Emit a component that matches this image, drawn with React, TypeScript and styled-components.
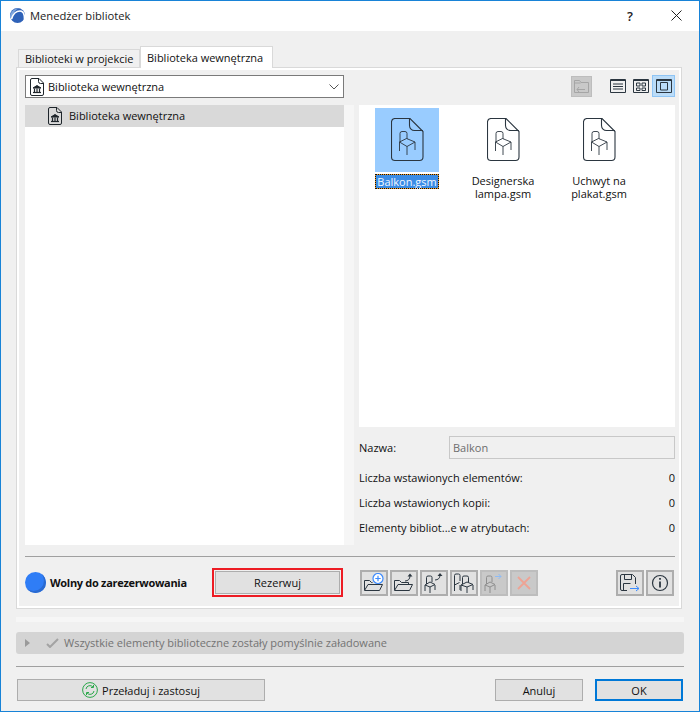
import * as React from 'react';
import styled, { createGlobalStyle } from 'styled-components';

const ink = '#2b3640';
const blue = '#3d8bfd';

const GlobalStyle = createGlobalStyle`
  html, body {
    margin: 0;
    padding: 0;
    background: #f0f0f0;
  }
  * { box-sizing: border-box; }
`;

const Window = styled.div`
  width: 700px;
  height: 712px;
  background: #f0f0f0;
  border: 1px solid #1883d7;
  font-family: "Open Sans", "Noto Sans", sans-serif;
  font-size: 11px;
  color: #111;
  display: flex;
  flex-direction: column;
  overflow: hidden;
`;

const TitleBar = styled.div`
  height: 30px;
  flex: none;
  background: #fff;
  display: flex;
  align-items: center;
  padding: 0 0 1px 9px;
  color: #222;
`;

const TitleText = styled.span`
  margin-left: 5px;
  font-size: 11.2px;
  flex: 1;
`;

const TitleHelp = styled.span`
  width: 46px;
  text-align: center;
  font-size: 13px;
  font-weight: 600;
`;

const TitleClose = styled.span`
  width: 46px;
  display: flex;
  justify-content: center;
`;

const Body = styled.div`
  flex: 1;
  display: flex;
  flex-direction: column;
  padding: 14px 15px 0 15px;
`;

const TabRow = styled.div`
  display: flex;
  align-items: flex-end;
  height: 22px;
  flex: none;
  padding-left: 2px;
  position: relative;
  z-index: 1;
`;

const Tab = styled.div<{ $active?: boolean }>`
  height: ${p => (p.$active ? '22px' : '18px')};
  margin-bottom: ${p => (p.$active ? '-1px' : '0')};
  padding: 0 6px;
  width: ${p => (p.$active ? '133px' : '122px')};
  display: flex;
  align-items: center;
  background: ${p => (p.$active ? '#fff' : '#f0f0f0')};
  border: 1px solid #d9d9d9;
  border-bottom: none;
  white-space: nowrap;
`;

const Panel = styled.div`
  width: 666px;
  height: 542px;
  flex: none;
  border: 1px solid #d9d9d9;
  box-shadow: inset 0 0 0 2px #fff;
  padding: 7px 6px 0 8px;
  display: flex;
  flex-direction: column;
`;

const Columns = styled.div`
  display: flex;
  height: 470px;
  flex: none;
`;

const LeftColumn = styled.div`
  width: 319px;
  display: flex;
  flex-direction: column;
  gap: 7px;
  flex: none;
`;

const Splitter = styled.div`
  width: 10px;
  margin-top: 30px;
  background: #f6f6f6;
  flex: none;
`;

const RightColumn = styled.div`
  flex: 1;
  padding-left: 5px;
  display: flex;
  flex-direction: column;
`;

const Combo = styled.div`
  height: 23px;
  flex: none;
  background: #fff;
  border: 1px solid #7a7a7a;
  display: flex;
  align-items: center;
  padding: 0 4px 0 4px;
  gap: 4px;
`;

const ComboLabel = styled.span`
  flex: 1;
`;

const Tree = styled.div`
  flex: 1;
  background: #fff;
`;

const TreeRow = styled.div`
  height: 22px;
  background: #d9d9d9;
  display: flex;
  align-items: center;
  padding-left: 23px;
  gap: 7px;
`;

const TreeLabel = styled.span`
  margin-bottom: 2px;
`;

const ViewBar = styled.div`
  height: 30px;
  flex: none;
  display: flex;
  justify-content: flex-end;
  align-items: flex-start;
`;

const FolderUp = styled.div`
  width: 21px;
  height: 21px;
  margin-top: 1px;
  margin-right: 14px;
  background: #c9c9c9;
  border: 1px solid #bdbdbd;
  display: flex;
  align-items: center;
  justify-content: center;
`;

const ViewButton = styled.div<{ $active?: boolean }>`
  width: 23px;
  height: 22px;
  display: flex;
  align-items: center;
  justify-content: center;
  background: ${p => (p.$active ? '#bbdcf8' : 'transparent')};
  border: 1px solid ${p => (p.$active ? '#8fc5f5' : 'transparent')};
`;

const Gallery = styled.div`
  height: 322px;
  flex: none;
  background: #fff;
  display: flex;
  align-items: flex-start;
  padding: 3px 0 0 16px;
  gap: 32px;
`;

const Item = styled.div`
  width: 64px;
  display: flex;
  flex-direction: column;
  align-items: center;
`;

const Tile = styled.div<{ $selected?: boolean }>`
  width: 64px;
  height: 64px;
  background: ${p => (p.$selected ? '#99ccff' : 'transparent')};
  display: flex;
  align-items: center;
  justify-content: center;
`;

const ItemLabel = styled.div<{ $selected?: boolean }>`
  margin-top: ${p => (p.$selected ? '3px' : '2px')};
  width: 76px;
  text-align: center;
  line-height: 13px;
  flex: none;
  ${p => p.$selected && `
    width: 62px;
    color: #f2f8ff;
    background: #3a8ce6;
    outline: 1px dotted #111;
    box-shadow: 0 0 0 1px #f29a1f;
  `}
`;

const NameRow = styled.div`
  display: flex;
  align-items: center;
  height: 23px;
  margin-top: 9px;
  flex: none;
`;

const NameLabel = styled.span`
  width: 90px;
`;

const NameInput = styled.div`
  flex: 1;
  height: 23px;
  border: 1px solid #c8c8c8;
  background: #f0f0f0;
  color: #6d6d6d;
  display: flex;
  align-items: center;
  padding-left: 3px;
`;

const Stats = styled.div`
  display: flex;
  flex-direction: column;
  margin-top: 6px;
`;

const StatRow = styled.div`
  height: 25px;
  display: flex;
  align-items: center;
  justify-content: space-between;
`;

const Divider = styled.div`
  height: 1px;
  flex: none;
  background: #a0a0a0;
`;

const PanelDivider = styled(Divider)`
  margin-top: 11px;
`;

const ActionRow = styled.div`
  display: flex;
  align-items: center;
  margin-top: 11px;
`;

const StatusDot = styled.div`
  width: 21px;
  height: 21px;
  border-radius: 50%;
  background: #2f7df6;
  box-shadow: inset -2px -2px 0 #2a6ad0;
  flex: none;
`;

const StatusText = styled.span`
  font-weight: 700;
  letter-spacing: -0.3px;
  margin-left: 4px;
  width: 162px;
  flex: none;
`;

const ReserveFrame = styled.div`
  width: 131px;
  height: 29px;
  border: 2px solid #ed1c24;
  padding: 1px;
  flex: none;
`;

const PushButton = styled.div`
  height: 100%;
  background: #e1e1e1;
  border: 1px solid #adadad;
  display: flex;
  align-items: center;
  justify-content: center;
  gap: 4px;
`;

const Tools = styled.div`
  display: flex;
  gap: 2px;
  margin-left: 17px;
`;

const ToolsEnd = styled(Tools)`
  margin-left: 78px;
`;

const ToolButton = styled.div<{ $disabled?: boolean }>`
  width: 28px;
  height: 26px;
  background: ${p => (p.$disabled ? '#c9c9c9' : '#e1e1e1')};
  border: 2px solid ${p => (p.$disabled ? '#bdbdbd' : '#adadad')};
  display: flex;
  align-items: center;
  justify-content: center;
`;

const Strip = styled.div`
  height: 5px;
  margin-top: 8px;
  flex: none;
  background: #f6f6f6;
`;

const MessageBar = styled.div`
  height: 22px;
  margin-top: 10px;
  flex: none;
  border-radius: 3px;
  background: #d4d4d4;
  color: #737373;
  display: flex;
  align-items: center;
  padding-left: 9px;
  width: 668px;
`;

const CheckMark = styled.svg`
  margin-left: 16px;
  flex: none;
`;

const MessageText = styled.span`
  margin-left: 5px;
  margin-bottom: 1px;
`;

const BottomDivider = styled(Divider)`
  margin-top: 12px;
  width: 668px;
`;

const Footer = styled.div`
  display: flex;
  align-items: center;
  margin-top: 12px;
  padding-left: 1px;
  height: 22px;
  width: 668px;
`;

const ReloadButton = styled(PushButton)`
  width: 248px;
  margin-right: 230px;
`;

const CancelButton = styled(PushButton)`
  width: 88px;
  margin-right: 12px;
`;

const OkButton = styled(PushButton)`
  width: 88px;
  border: 2px solid #0078d7;
`;

const Doc = styled.svg`
  flex: none;
  display: block;
`;

const LibraryDoc: React.FC = () => (
  <Doc width="14" height="18" viewBox="0 0 14 18" fill="none" stroke="#1e252b">
    <path d="M2 .5h7l4.500 4.500v11a1.500 1.500 0 0 1-1.500 1.500H2A1.500 1.500 0 0 1 .5 16V2A1.500 1.500 0 0 1 2 .5z" />
    <path d="M8.500 .5v3a2 2 0 0 0 2 2h3" />
    <path d="M7 7.500l4 2.500H3z" fill="#1e252b" />
    <path d="M4.500 10.500V14M7 10.500V14M9.500 10.500V14" strokeWidth="1.200" />
    <path d="M3 14.500h8" strokeWidth="1.200" />
  </Doc>
);

const ChairDoc: React.FC = () => (
  <Doc width="33" height="44" viewBox="0 0 33 44" fill="none" stroke={ink}>
    <path d="M4 .5h15l13 13V39a3.500 3.500 0 0 1-3.500 3.500H4A3.500 3.500 0 0 1 .5 39V4A3.500 3.500 0 0 1 4 .5z" strokeWidth="1.100" />
    <path d="M18.500 .5v7a5 5 0 0 0 5 5h8.500" strokeWidth="1.100" />
    <path d="M9 24V15.500a2 2 0 0 1 2-2h3a2 2 0 0 1 2 2V21" strokeWidth="0.900" />
    <path d="M8.500 24l7-3.500 8.500 3.500-8 4.500z" strokeWidth="0.900" />
    <path d="M8.500 24v9M24 24v8M16 28.500V37" strokeWidth="0.900" />
  </Doc>
);

const ButtonSvg = styled.svg`
  display: block;
  flex: none;
`;

const ChairGlyph: React.FC = () => (
  <>
    <path d="M3.500 12V5.500a1.500 1.500 0 0 1 1.500-1.500h2.500a1.500 1.500 0 0 1 1.500 1.500V10" />
    <path d="M2 13l5-3 5 2.500-5 2.500z" />
    <path d="M2 13v6M7 15v6M12 13v5" />
  </>
);

const Glyph: React.FC<{ kind: string }> = ({ kind }) => {
  switch (kind) {
    case 'add':
      return (
        <ButtonSvg width="22" height="20" viewBox="0 0 22 20" fill="none" stroke={ink}>
          <path d="M1.500 17V7.500h5l2 2h1M1.500 17.500h15l3-6H5l-3.500 6z" />
          <circle cx="15" cy="5.500" r="5" fill="#fff" stroke={blue} strokeWidth="1.200" />
          <path d="M15 2.800v5.400M12.300 5.500h5.400" stroke={blue} strokeWidth="1.200" />
        </ButtonSvg>
      );
    case 'folder':
      return (
        <ButtonSvg width="22" height="20" viewBox="0 0 22 20" fill="none" stroke={ink}>
          <path d="M1.500 17V7.500h5l2 2h7v2M1.500 17.500h15l3-6H5l-3.500 6z" />
          <path d="M12 8c3 0 5-2 5-5" />
          <path d="M17 .5l2.500 3h-5z" fill={ink} stroke="none" />
        </ButtonSvg>
      );
    case 'chairUp':
      return (
        <ButtonSvg width="22" height="22" viewBox="0 0 22 22" fill="none" stroke={ink}>
          <ChairGlyph />
          <path d="M12 8c3 0 5-2 5-4.500" />
          <path d="M17 1l2.500 3h-5z" fill={ink} stroke="none" />
        </ButtonSvg>
      );
    case 'chairs':
      return (
        <ButtonSvg width="22" height="22" viewBox="0 0 22 22" fill="none" stroke={ink}>
          <path d="M1.500 13V3.500A1.500 1.500 0 0 1 3 2h2.500A1.500 1.500 0 0 1 7 3.500V9" />
          <path d="M1.500 13l5-2.500M1.500 13v6M7 13v5" />
          <path d="M9.500 12V5.500A1.500 1.500 0 0 1 11 4h3a1.500 1.500 0 0 1 1.500 1.500V10" />
          <path d="M8 13l6-3 6 2.500-6 2.500zM8 13v6M14 15v6M20 13v5" />
        </ButtonSvg>
      );
    case 'chairPlace':
      return (
        <ButtonSvg width="22" height="22" viewBox="0 0 22 22" fill="none" stroke="#8e8e8e">
          <ChairGlyph />
          <path d="M12 4.500h6M15.500 2l2.500 2.500L15.500 7" stroke="#8fbcf5" />
        </ButtonSvg>
      );
    case 'delete':
      return (
        <ButtonSvg width="14" height="14" viewBox="0 0 14 14" fill="none" stroke="#eea394" strokeWidth="1.800">
          <path d="M1 1l12 12M13 1L1 13" />
        </ButtonSvg>
      );
    case 'save':
      return (
        <ButtonSvg width="20" height="18" viewBox="0 0 20 18" fill="none" stroke={ink}>
          <path d="M7 16.500H2A1.500 1.500 0 0 1 .5 15V2A1.500 1.500 0 0 1 2 .5h10.500l3 3V10" />
          <path d="M4.500 .5v5h7v-5M3.500 16v-6.500h7" />
          <path d="M10 14.500h9M16 12l3 2.500L16 17" stroke={blue} />
        </ButtonSvg>
      );
    default:
      return (
        <ButtonSvg width="18" height="18" viewBox="0 0 18 18" fill="none" stroke={ink}>
          <circle cx="9" cy="9" r="7.500" strokeWidth="1.200" />
          <path d="M9 7.500v6" strokeWidth="1.800" />
          <path d="M9 4v1.800" strokeWidth="1.800" />
        </ButtonSvg>
      );
  }
};

const items = [
  { label: 'Balkon.gsm', selected: true },
  { label: 'Designerska lampa.gsm' },
  { label: 'Uchwyt na plakat.gsm' },
];

const stats = [
  'Liczba wstawionych elementów:',
  'Liczba wstawionych kopii:',
  'Elementy bibliot...e w atrybutach:',
];

export default function App() {
  return (
    <Window>
      <GlobalStyle />
      <TitleBar>
        <svg width="15" height="15" viewBox="0 0 15 15">
          <circle cx="7.500" cy="7.500" r="7.500" fill="#2f62b8" />
          <path d="M0 8C1 3 5 0 9 .3 5 2 3 5 2.500 9 2 13 1 12 0 8z" fill="#7fa6dd" />
          <path d="M1.500 11C3 6 6 3 10 3s4.500 4 4.500 8" fill="none" stroke="#fff" strokeWidth="1.600" />
        </svg>
        <TitleText>Menedżer bibliotek</TitleText>
        <TitleHelp>?</TitleHelp>
        <TitleClose>
          <svg width="11" height="11" viewBox="0 0 11 11" fill="none" stroke="#222">
            <path d="M.5 .5l10 10M10.500 .5l-10 10" />
          </svg>
        </TitleClose>
      </TitleBar>
      <Body>
        <TabRow>
          <Tab>Biblioteki w projekcie</Tab>
          <Tab $active>Biblioteka wewnętrzna</Tab>
        </TabRow>
        <Panel>
          <Columns>
            <LeftColumn>
              <Combo>
                <LibraryDoc />
                <ComboLabel>Biblioteka wewnętrzna</ComboLabel>
                <svg width="10" height="6" viewBox="0 0 10 6" fill="none" stroke="#555">
                  <path d="M.5 .5L5 5l4.500-4.500" />
                </svg>
              </Combo>
              <Tree>
                <TreeRow>
                  <LibraryDoc />
                  <TreeLabel>Biblioteka wewnętrzna</TreeLabel>
                </TreeRow>
              </Tree>
            </LeftColumn>
            <Splitter />
            <RightColumn>
              <ViewBar>
                <FolderUp>
                  <svg width="15" height="13" viewBox="0 0 15 13" fill="none" stroke="#a5a5a5">
                    <path d="M.5 12.500V.5h5l1.500 2h7.500v10zM.5 3h6M3 9.500h8M5 7L3 9.500 5 12" />
                  </svg>
                </FolderUp>
                <ViewButton>
                  <svg width="16" height="14" viewBox="0 0 16 14" fill="none" stroke={ink}>
                    <path d="M.5 .5h15v13H.500z" />
                    <path d="M.5 1.500h15" />
                    <path d="M3 5h10M3 7.500h10M3 10h10" />
                  </svg>
                </ViewButton>
                <ViewButton>
                  <svg width="16" height="14" viewBox="0 0 16 14" fill="none" stroke={ink}>
                    <path d="M.5 .5h15v13H.500z" />
                    <path d="M.5 1.500h15" />
                    <path d="M3.500 4h3.500v3H3.500zM9 4h3.500v3H9zM3.500 9h3.500v2.500H3.500zM9 9h3.500v2.500H9z" />
                  </svg>
                </ViewButton>
                <ViewButton $active>
                  <svg width="16" height="14" viewBox="0 0 16 14" fill="none" stroke={ink}>
                    <path d="M.5 .5h15v13H.500z" />
                    <path d="M.5 1.500h15" />
                    <path d="M4.500 3.500h7v7.500h-7z" />
                  </svg>
                </ViewButton>
              </ViewBar>
              <Gallery>
                {items.map(item => (
                  <Item key={item.label}>
                    <Tile $selected={item.selected}>
                      <ChairDoc />
                    </Tile>
                    <ItemLabel $selected={item.selected}>{item.label}</ItemLabel>
                  </Item>
                ))}
              </Gallery>
              <NameRow>
                <NameLabel>Nazwa:</NameLabel>
                <NameInput>Balkon</NameInput>
              </NameRow>
              <Stats>
                {stats.map(label => (
                  <StatRow key={label}>
                    <span>{label}</span>
                    <span>0</span>
                  </StatRow>
                ))}
              </Stats>
            </RightColumn>
          </Columns>
          <PanelDivider />
          <ActionRow>
            <StatusDot />
            <StatusText>Wolny do zarezerwowania</StatusText>
            <ReserveFrame>
              <PushButton>Rezerwuj</PushButton>
            </ReserveFrame>
            <Tools>
              <ToolButton><Glyph kind="add" /></ToolButton>
              <ToolButton><Glyph kind="folder" /></ToolButton>
              <ToolButton><Glyph kind="chairUp" /></ToolButton>
              <ToolButton><Glyph kind="chairs" /></ToolButton>
              <ToolButton $disabled><Glyph kind="chairPlace" /></ToolButton>
              <ToolButton $disabled><Glyph kind="delete" /></ToolButton>
            </Tools>
            <ToolsEnd>
              <ToolButton><Glyph kind="save" /></ToolButton>
              <ToolButton><Glyph kind="info" /></ToolButton>
            </ToolsEnd>
          </ActionRow>
        </Panel>
        <Strip />
        <MessageBar>
          <svg width="5" height="8" viewBox="0 0 5 8">
            <path d="M0 0l5 4-5 4z" fill="#9a9a9a" />
          </svg>
          <CheckMark width="13" height="10" viewBox="0 0 13 10" fill="none" stroke="#a3a3a3" strokeWidth="2">
            <path d="M1 6l3 3 8-8" />
          </CheckMark>
          <MessageText>Wszystkie elementy biblioteczne zostały pomyślnie załadowane</MessageText>
        </MessageBar>
        <BottomDivider />
        <Footer>
          <ReloadButton>
            <svg width="16" height="16" viewBox="0 0 16 16" fill="none" stroke="#2aa84a">
              <circle cx="8" cy="8" r="7.400" />
              <path d="M4 7a4 4 0 0 1 7-2M12 9a4 4 0 0 1-7 2" />
              <path d="M11.500 3v2.500H9M4.500 13v-2.500H7" />
            </svg>
            Przeładuj i zastosuj
          </ReloadButton>
          <CancelButton>Anuluj</CancelButton>
          <OkButton>OK</OkButton>
        </Footer>
      </Body>
    </Window>
  );
}
